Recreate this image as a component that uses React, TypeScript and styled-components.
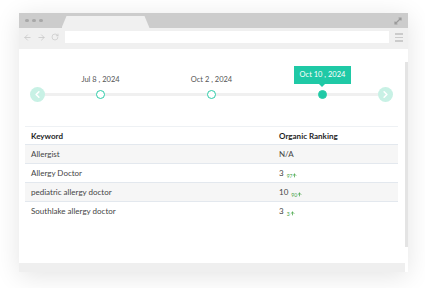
import React from "react";
import styled, { createGlobalStyle } from "styled-components";
import {
  ArrowLeft,
  ArrowRight,
  RotateCw,
  ChevronLeft,
  ChevronRight,
  ArrowUp,
} from "lucide-react";

const GlobalStyle = createGlobalStyle`
  html, body {
    margin: 0;
    padding: 0;
    background: #fff;
  }
  body {
    font-family: Lato, "Liberation Sans", sans-serif;
  }
`;

const Page = styled.div`
  width: 425px;
  height: 288px;
  box-sizing: border-box;
  padding: 13px 0 0 19px;
  background: #fff;
`;

const Frame = styled.div`
  width: 389px;
  display: flex;
  flex-direction: column;
  box-shadow: 0 4px 24px rgba(0, 0, 0, 0.11);
`;

const TitleBar = styled.div`
  height: 15px;
  display: flex;
  align-items: flex-end;
  padding: 0 6px 0 6px;
  background: #cccccc;
`;

const Dots = styled.div`
  display: flex;
  gap: 3.5px;
  align-self: center;
`;

const Dot3 = styled.span`
  width: 3.5px;
  height: 3.5px;
  border-radius: 50%;
  background: #a8a8a8;
`;

const Tab = styled.div`
  width: 88px;
  height: 12px;
  margin-left: 19px;
  background: #f0f0f0;
  clip-path: polygon(5px 0, 83px 0, 88px 100%, 0 100%);
`;

const Expand = styled.svg`
  margin-left: auto;
  align-self: center;
`;

const Toolbar = styled.div`
  height: 21px;
  display: flex;
  align-items: flex-start;
  padding-top: 3px;
  box-sizing: border-box;
  background: #f0f0f0;
`;

const NavIcons = styled.div`
  display: flex;
  gap: 5px;
  padding: 2px 0 0 4px;
  color: #c6c6c6;
`;

const Address = styled.div`
  width: 324px;
  height: 12px;
  margin-left: 6px;
  background: #fff;
`;

const Menu = styled.div`
  display: flex;
  flex-direction: column;
  gap: 2px;
  margin: 2px 0 0 6px;

  span {
    width: 8px;
    height: 1.5px;
    background: #cbcbcb;
  }
`;

const Body = styled.div`
  height: 214px;
  display: flex;
  background: #fff;
`;

const Main = styled.div`
  flex: 1;
  padding-top: 17px;
`;

const Scrollbar = styled.div`
  width: 3px;
  padding-top: 13px;

  div {
    height: 185px;
    background: #e4e4e4;
  }
`;

const Footer = styled.div`
  height: 9px;
  margin-right: 3px;
  background: #efefef;
`;

const Timeline = styled.div`
  position: relative;
  width: max-content;
  display: flex;
  align-items: flex-end;
  margin-left: 11px;

  &::before {
    content: "";
    position: absolute;
    left: 8px;
    right: 8px;
    bottom: 3px;
    height: 3px;
    background: #f0f0f0;
  }
`;

const NavButton = styled.div`
  position: relative;
  z-index: 1;
  width: 15px;
  height: 15px;
  margin-bottom: -3px;
  border-radius: 50%;
  display: flex;
  align-items: center;
  justify-content: center;
  background: #c8f1e5;
  color: #fff;
`;

const Stop = styled.div`
  position: relative;
  z-index: 1;
  width: 111px;
  display: flex;
  flex-direction: column;
  align-items: center;
`;

const DateLabel = styled.div`
  font-size: 7.5px;
  line-height: 12px;
  color: #555;
  margin-bottom: 4px;
  white-space: nowrap;
`;

const Tooltip = styled.div`
  position: relative;
  height: 18px;
  padding: 0 6px;
  margin-bottom: 6px;
  font-size: 7.5px;
  line-height: 18px;
  color: #fff;
  background: #1fc9a6;
  white-space: nowrap;

  &::after {
    content: "";
    position: absolute;
    left: 50%;
    bottom: -3px;
    margin-left: -3px;
    border: 3px solid transparent;
    border-bottom: 0;
    border-top-color: #1fc9a6;
  }
`;

const Node = styled.div<{ $active?: boolean }>`
  width: 9px;
  height: 9px;
  box-sizing: border-box;
  border-radius: 50%;
  border: 1.5px solid #2ccca8;
  background: ${(p) => (p.$active ? "#1fc9a6" : "#fff")};
`;

const Table = styled.table`
  width: 373px;
  margin: 27px 0 0 6px;
  border-collapse: collapse;
  font-size: 8px;

  th {
    height: 17px;
    padding: 0 6px;
    text-align: left;
    font-weight: 700;
    color: #1e1e1e;
    border-top: 1px solid #eef1f4;
  }

  td {
    height: 18px;
    padding: 0 6px;
    color: #444;
    border-top: 1px solid #e3e8ee;
  }

  tbody tr:nth-child(odd) td {
    background: #f6f6f6;
  }

  th:first-child,
  td:first-child {
    width: 236px;
  }
`;

const Delta = styled.span`
  display: inline-flex;
  align-items: center;
  margin-left: 3px;
  font-size: 5px;
  color: #3fa33f;
  vertical-align: -2px;
`;

const dates = [
  { label: "Jul 8 , 2024", active: false },
  { label: "Oct 2 , 2024", active: false },
  { label: "Oct 10 , 2024", active: true },
];

const rows = [
  { keyword: "Allergist", rank: "N/A" },
  { keyword: "Allergy Doctor", rank: "3", delta: "97" },
  { keyword: "pediatric allergy doctor", rank: "10", delta: "90" },
  { keyword: "Southlake allergy doctor", rank: "3", delta: "3" },
];

export default function App() {
  return (
    <Page>
      <GlobalStyle />
      <Frame>
        <TitleBar>
          <Dots>
            <Dot3 />
            <Dot3 />
            <Dot3 />
          </Dots>
          <Tab />
          <Expand width="8" height="8" viewBox="0 0 8 8">
            <path
              d="M1 7 L7 1 M4.5 1 H7 V3.5 M1 4.5 V7 H3.5"
              stroke="#9a9a9a"
              strokeWidth="1.2"
              fill="none"
            />
          </Expand>
        </TitleBar>
        <Toolbar>
          <NavIcons>
            <ArrowLeft size={9} strokeWidth={2} />
            <ArrowRight size={9} strokeWidth={2} />
            <RotateCw size={8} strokeWidth={2} />
          </NavIcons>
          <Address />
          <Menu>
            <span />
            <span />
            <span />
          </Menu>
        </Toolbar>
        <Body>
          <Main>
            <Timeline>
              <NavButton>
                <ChevronLeft size={11} strokeWidth={3.5} />
              </NavButton>
              {dates.map((d) => (
                <Stop key={d.label}>
                  {d.active ? (
                    <Tooltip>{d.label}</Tooltip>
                  ) : (
                    <DateLabel>{d.label}</DateLabel>
                  )}
                  <Node $active={d.active} />
                </Stop>
              ))}
              <NavButton>
                <ChevronRight size={11} strokeWidth={3.5} />
              </NavButton>
            </Timeline>

            <Table>
              <thead>
                <tr>
                  <th>Keyword</th>
                  <th>Organic Ranking</th>
                </tr>
              </thead>
              <tbody>
                {rows.map((r) => (
                  <tr key={r.keyword}>
                    <td>{r.keyword}</td>
                    <td>
                      {r.rank}
                      {r.delta && (
                        <Delta>
                          {r.delta}
                          <ArrowUp size={5} strokeWidth={3.5} />
                        </Delta>
                      )}
                    </td>
                  </tr>
                ))}
              </tbody>
            </Table>
          </Main>
          <Scrollbar>
            <div />
          </Scrollbar>
        </Body>
        <Footer />
      </Frame>
    </Page>
  );
}
